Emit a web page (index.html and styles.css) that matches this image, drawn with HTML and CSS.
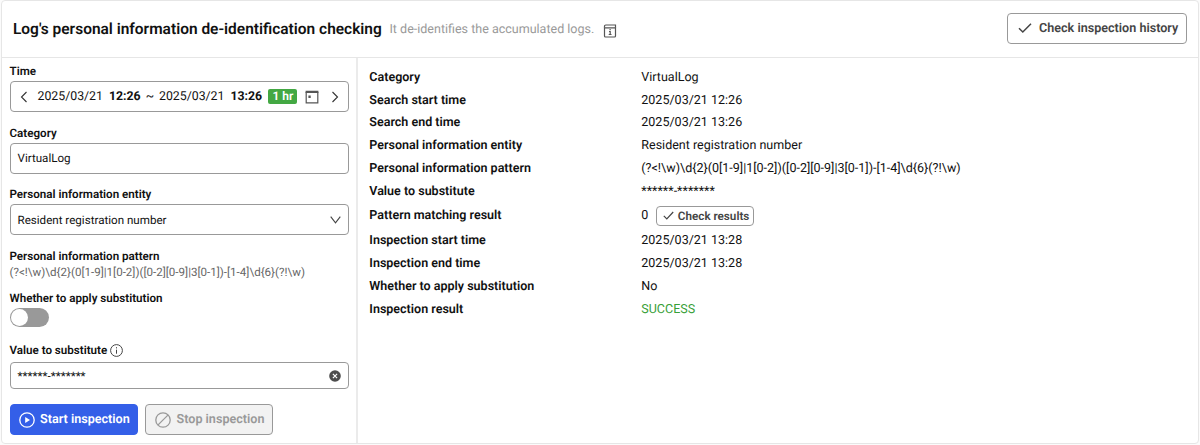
FILE: index.html
```html
<!DOCTYPE html>
<html lang="en">
<head>
<meta charset="utf-8">
<title>Log's personal information de-identification checking</title>
<link rel="stylesheet" href="styles.css">
</head>
<body>
<main class="panel">
  <header class="header">
    <h1 class="title">Log's personal information de-identification checking</h1>
    <span class="subtitle">It de-identifies the accumulated logs.</span>
    <svg class="manual-icon" width="14" height="14" viewBox="0 0 14 14" fill="none" stroke="#555" stroke-width="1.2"><path d="M1.5 3.8V12a1 1 0 0 0 1 1h9a1 1 0 0 0 1-1V3.8z"/><path d="M12.5 3.8V1H2.8a1.3 1.3 0 0 0-1.3 1.4v1.4"/><path d="M6 7.5h1.2v3M5.7 10.5h2.8M6.5 5.6h1.2"/></svg>
    <button class="btn history"><svg width="14" height="12" viewBox="0 0 14 12" fill="none" stroke="#444" stroke-width="1.5"><path d="M1 6.2l3.8 3.8L13 1.8"/></svg><span>Check inspection history</span></button>
  </header>
  <div class="body">
    <form class="side">
      <div class="label">Time</div>
      <div class="box time">
        <svg class="prev" width="8" height="12" viewBox="0 0 8 12" fill="none" stroke="#333" stroke-width="1.1"><path d="M6.5 1L1.5 6l5 5"/></svg>
        <span class="date">2025/03/21</span><b class="clock">12:26</b><span class="tilde">~</span><span class="date">2025/03/21</span><b class="clock">13:26</b><span class="badge">1 hr</span>
        <svg class="calendar" width="14" height="14" viewBox="0 0 14 14"><path d="M1.2 2v10.8h11.6V2" fill="none" stroke="#555" stroke-width="1.2"/><path d="M.6.7h12.8v2.2H.6zM3.4 5.6h2.3v2.3H3.4z" fill="#555"/></svg>
        <svg class="next" width="8" height="12" viewBox="0 0 8 12" fill="none" stroke="#333" stroke-width="1.1"><path d="M1.5 1l5 5-5 5"/></svg>
      </div>
      <div class="label">Category</div>
      <div class="box"><span class="value">VirtualLog</span></div>
      <div class="label">Personal information entity</div>
      <div class="box"><span class="value">Resident registration number</span><svg class="end" width="11" height="8" viewBox="0 0 11 8" fill="none" stroke="#444" stroke-width="1.1"><path d="M.7.7l4.8 6.2L10.3.7"/></svg></div>
      <div class="label">Personal information pattern</div>
      <div class="pattern">(?&lt;!\w)\d{2}(0[1-9]|1[0-2])([0-2][0-9]|3[0-1])-[1-4]\d{6}(?!\w)</div>
      <div class="label apply">Whether to apply substitution</div>
      <div class="toggle"><span class="knob"></span></div>
      <div class="label substitute"><span>Value to substitute</span><svg width="13" height="13" viewBox="0 0 13 13" fill="none" stroke="#444"><circle cx="6.5" cy="6.5" r="5.9"/><path d="M6.5 5.7v4M6.5 3.2v1.2"/></svg></div>
      <div class="box short"><span class="value">******-*******</span><svg class="end" width="12" height="12" viewBox="0 0 12 12"><circle cx="6" cy="6" r="5.8" fill="#4d4d4d"/><path d="M3.9 3.9l4.2 4.2M8.1 3.9L3.9 8.1" stroke="#fff" stroke-width="1.2"/></svg></div>
      <div class="actions">
        <button type="button" class="btn start"><svg width="16" height="16" viewBox="0 0 16 16"><circle cx="8" cy="8" r="7.2" fill="none" stroke="#fff" stroke-width="1.3"/><path d="M6.2 5.1L11 8l-4.8 2.9z" fill="#fff"/></svg><span>Start inspection</span></button>
        <button type="button" class="btn stop"><svg width="16" height="16" viewBox="0 0 16 16" fill="none" stroke="#999" stroke-width="1.3"><circle cx="8" cy="8" r="7.2"/><path d="M3.1 12.9l9.8-9.8"/></svg><span>Stop inspection</span></button>
      </div>
    </form>
    <dl class="details">
      <dt>Category</dt><dd>VirtualLog</dd>
      <dt>Search start time</dt><dd>2025/03/21 12:26</dd>
      <dt>Search end time</dt><dd>2025/03/21 13:26</dd>
      <dt>Personal information entity</dt><dd>Resident registration number</dd>
      <dt>Personal information pattern</dt><dd>(?&lt;!\w)\d{2}(0[1-9]|1[0-2])([0-2][0-9]|3[0-1])-[1-4]\d{6}(?!\w)</dd>
      <dt>Value to substitute</dt><dd>******-*******</dd>
      <dt>Pattern matching result</dt><dd class="match">0<button class="btn results"><svg width="11" height="9" viewBox="0 0 11 9" fill="none" stroke="#444" stroke-width="1.2"><path d="M.8 4.8l3 3L10.2 1"/></svg><span>Check results</span></button></dd>
      <dt>Inspection start time</dt><dd>2025/03/21 13:28</dd>
      <dt>Inspection end time</dt><dd>2025/03/21 13:28</dd>
      <dt>Whether to apply substitution</dt><dd>No</dd>
      <dt>Inspection result</dt><dd class="success">SUCCESS</dd>
    </dl>
  </div>
</main>
</body>
</html>
```
FILE: styles.css
```css
* { box-sizing: border-box; }
body { margin: 0; height: 445px; padding: 0 1px; background: #fbfbfb; color: #111; font-family: Roboto, sans-serif; font-size: 12.52px; text-rendering: geometricPrecision; overflow: hidden; }
svg { display: block; flex: none; }
span, b, h1 { white-space: nowrap; }
.panel { height: 444px; background: #fff; border: 1px solid #e6e6e6; border-radius: 4px; }
.header { display: flex; align-items: center; height: 57px; padding: 0 11px 2px; border-bottom: 1px solid #e6e6e6; }
.title { margin: 2px 0 0; font-size: 15.48px; font-weight: 600; line-height: 20px; }
.subtitle { margin: 2px 0 0 7.7px; color: #999; }
.manual-icon { margin: 5px 0 0 8.7px; }
.btn { display: flex; align-items: center; padding: 0; font-family: inherit; font-size: 12.6px; font-weight: 600; text-rendering: inherit; border: 1px solid #999; border-radius: 4px; background: #fff; color: #444; }
.history { margin-left: auto; width: 180px; height: 31px; padding-left: 10px; gap: 7px; }
.body { display: flex; height: 385px; }
.side { width: 356px; padding: 6px 8px 0 7.5px; border-right: 2px solid #ebebeb; }
.label { height: 17px; line-height: 15px; font-size: 11.62px; font-weight: 600; }
.box { display: flex; align-items: center; width: 339.4px; height: 31px; margin-bottom: 13.7px; padding: 0 7px; border: 1px solid #999; border-radius: 4px; font-size: 11.6px; }
.end { margin-left: auto; }
.time { padding: 0 9px; font-size: 12.3px; }
.prev { margin-right: 10px; }
.clock { margin-left: 6px; font-weight: 700; }
.tilde { margin: 0 5px; }
.badge { margin-left: 6.3px; flex: none; width: 29px; height: 15px; line-height: 15px; border-radius: 2px; background: #43a843; color: #fff; font-size: 12px; font-weight: 600; text-align: center; }
.calendar { margin-left: 8px; }
.next { margin: 0 0 0 auto; }
.pattern { height: 25.4px; line-height: 13px; font-size: 11.58px; color: #666; white-space: nowrap; }
.toggle { width: 39px; height: 19px; margin-bottom: 16px; padding: 1px; border-radius: 10px; background: #999; }
.knob { display: block; width: 17px; height: 17px; border-radius: 50%; background: #fff; }
.apply { height: 17px; }
.substitute { display: flex; gap: 3px; height: 19px; }
.substitute svg { margin-top: 1px; }
.short { height: 27px; margin-bottom: 15px; }
.actions { display: flex; gap: 7.5px; }
.actions .btn { width: 128px; height: 31px; padding-left: 8px; gap: 5.5px; }
.actions .start { border-color: #345fe8; background: #345fe8; color: #fff; }
.actions .stop { padding-left: 9px; background: #f2f2f2; color: #999; }
.details { display: grid; grid-template-columns: 272px 1fr; grid-template-rows: repeat(6, 22.8px) 26px repeat(3, 23px) 24px; align-content: start; align-items: center; margin: 0; padding: 8px 0 0 11.3px; }
dt { font-weight: 600; }
dd { margin: 0; white-space: nowrap; }
.match { display: flex; align-items: center; gap: 7.5px; }
.results { width: 98px; height: 20px; padding-left: 6px; gap: 4px; font-size: 11.7px; }
.success { color: #38a038; }
```
